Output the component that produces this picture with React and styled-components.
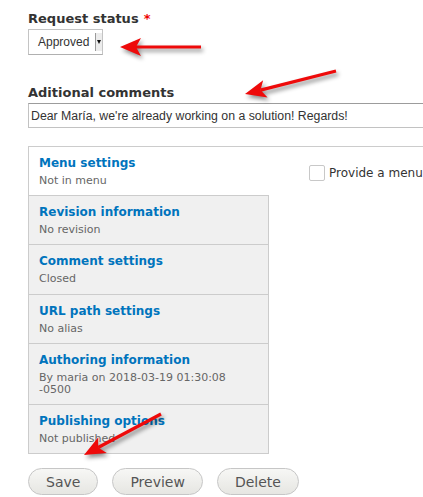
import React from 'react'
import styled, { createGlobalStyle } from 'styled-components'

const GlobalStyle = createGlobalStyle`
    html, body {
        margin: 0;
        padding: 0;
        background: #fff;
        overflow: hidden;
    }
    body {
        font-family: "DejaVu Sans", Verdana, sans-serif;
        color: #333;
    }
`

const Page = styled.form`
    position: relative;
    width: 620px;
    height: 497px;
    padding: 10px 0 0 28px;
    box-sizing: border-box;
`

const FormItem = styled.div`
    margin-top: ${p => p.$gap || 0}px;
`

const Label = styled.label`
    display: block;
    font-size: 13px;
    font-weight: bold;
    line-height: 17px;
    margin-bottom: 2px;
    color: #333;
`

const Required = styled.span`
    color: #e00;
    margin-left: 5px;
`

const Select = styled.div`
    width: 75px;
    height: 26px;
    box-sizing: border-box;
    display: flex;
    align-items: stretch;
    border: 1px solid #c4c4c4;
    border-bottom-color: #b0b0b0;
    background: #fff;
    font-family: "Liberation Sans", Arial, sans-serif;
    font-size: 12px;
    color: #333;
`

const SelectValue = styled.span`
    flex: 1;
    display: flex;
    align-items: center;
    padding-left: 9px;
`

const SelectArrow = styled.span`
    width: 6px;
    margin: 3px 0;
    background: #ececec;
    border-left: 1px solid #9a9a9a;
    display: flex;
    align-items: center;
    justify-content: center;
    &::after {
        content: "";
        border-left: 2px solid transparent;
        border-right: 2px solid transparent;
        border-top: 4px solid #111;
    }
`

const TextInput = styled.input`
    display: block;
    width: 430px;
    height: 25px;
    box-sizing: border-box;
    margin: 0;
    padding: 0 2px;
    border: 1px solid #c2c2c2;
    border-top-color: #9c9c9c;
    font-family: "Liberation Sans", Arial, sans-serif;
    font-size: 12.3px;
    color: #333;
    outline: none;
`

const VerticalTabs = styled.div`
    margin-top: 18px;
    display: flex;
    align-items: flex-start;
    border-top: 1px solid #ccc;
    border-left: 1px solid #ccc;
`

const TabMenu = styled.ul`
    margin: 0;
    padding: 0;
    width: 240px;
    list-style: none;
    border-bottom: 1px solid #ccc;
`

const TabItem = styled.li`
    padding: 7px 10px ${p => 8 + (p.$extra || 0)}px 10px;
    border-top: ${p => (p.$first ? 'none' : '1px solid #ccc')};
    border-right: 1px solid ${p => (p.$selected ? '#fff' : '#ccc')};
    background: ${p => (p.$selected ? '#fff' : '#f0f0f0')};
`

const TabTitle = styled.strong`
    display: block;
    font-size: 12px;
    line-height: 18px;
    color: #0074bd;
`

const TabSummary = styled.span`
    display: block;
    margin-top: 3px;
    font-size: 11px;
    line-height: 12px;
    color: #666;
`

const TabPane = styled.div`
    flex: 1;
    padding: 18px 0 0 40px;
`

const CheckRow = styled.label`
    display: flex;
    align-items: center;
    gap: 4px;
    font-size: 12px;
    color: #333;
    white-space: nowrap;
`

const CheckBox = styled.span`
    width: 16px;
    height: 16px;
    box-sizing: border-box;
    border: 1px solid #c8c8c8;
    border-radius: 2px;
    background: #fff;
`

const Actions = styled.div`
    margin-top: 14px;
    display: flex;
    gap: 14px;
`

const Button = styled.button`
    height: 27px;
    box-sizing: border-box;
    padding: 0 17px;
    border: 1px solid #c6c6c6;
    border-radius: 20px;
    background: linear-gradient(to bottom, #f7f7f5, #e6e6e2);
    font-family: "DejaVu Sans", Verdana, sans-serif;
    font-size: 14px;
    color: #555;
`

const Overlay = styled.svg`
    position: absolute;
    top: 0;
    left: 0;
    pointer-events: none;
    filter: drop-shadow(2px 3px 2px rgba(0, 0, 0, 0.45));
`

const tabs = [
    { title: 'Menu settings', summary: 'Not in menu' },
    { title: 'Revision information', summary: 'No revision' },
    { title: 'Comment settings', summary: 'Closed', extra: 1 },
    { title: 'URL path settings', summary: 'No alias' },
    { title: 'Authoring information', summary: 'By maria on 2018-03-19 01:30:08 -0500' },
    { title: 'Publishing options', summary: 'Not published' },
]

// red call-out arrow from tail to tip
const Arrow = ({ from, to }) => {
    const [x1, y1] = from
    const [x2, y2] = to
    const len = Math.hypot(x2 - x1, y2 - y1)
    const ux = (x2 - x1) / len
    const uy = (y2 - y1) / len
    const head = 21
    const half = 9
    const bx = x2 - ux * head
    const by = y2 - uy * head
    const nx = x2 - ux * (head - 5)
    const ny = y2 - uy * (head - 5)
    const pts = [
        [x2, y2],
        [bx - uy * half, by + ux * half],
        [nx, ny],
        [bx + uy * half, by - ux * half],
    ].map(p => p.join(',')).join(' ')
    return (
        <g>
            <line x1={x1} y1={y1} x2={nx} y2={ny} stroke="#ee0a0a" strokeWidth="3.2" strokeLinecap="butt" />
            <polygon points={pts} fill="#ee0a0a" />
        </g>
    )
}

const App = () => {
    return (
        <>
            <GlobalStyle />
            <Page onSubmit={e => e.preventDefault()}>
                <FormItem>
                    <Label>Request status<Required>*</Required></Label>
                    <Select>
                        <SelectValue>Approved</SelectValue>
                        <SelectArrow />
                    </Select>
                </FormItem>

                <FormItem $gap={29}>
                    <Label>Aditional comments</Label>
                    <TextInput readOnly value="Dear María, we're already working on a solution! Regards!" />
                </FormItem>

                <VerticalTabs>
                    <TabMenu>
                        {tabs.map((t, i) => (
                            <TabItem key={t.title} $first={i === 0} $selected={i === 0} $extra={t.extra}>
                                <TabTitle>{t.title}</TabTitle>
                                <TabSummary>{t.summary}</TabSummary>
                            </TabItem>
                        ))}
                    </TabMenu>
                    <TabPane>
                        <CheckRow>
                            <CheckBox />
                            Provide a menu link
                        </CheckRow>
                    </TabPane>
                </VerticalTabs>

                <Actions>
                    <Button type="button">Save</Button>
                    <Button type="button">Preview</Button>
                    <Button type="button">Delete</Button>
                </Actions>

                <Overlay width="423" height="497" viewBox="0 0 423 497">
                    <Arrow from={[201, 47]} to={[120, 47]} />
                    <Arrow from={[336, 71]} to={[245, 94]} />
                    <Arrow from={[161, 414]} to={[84, 455]} />
                </Overlay>
            </Page>
        </>
    )
}

export default App
